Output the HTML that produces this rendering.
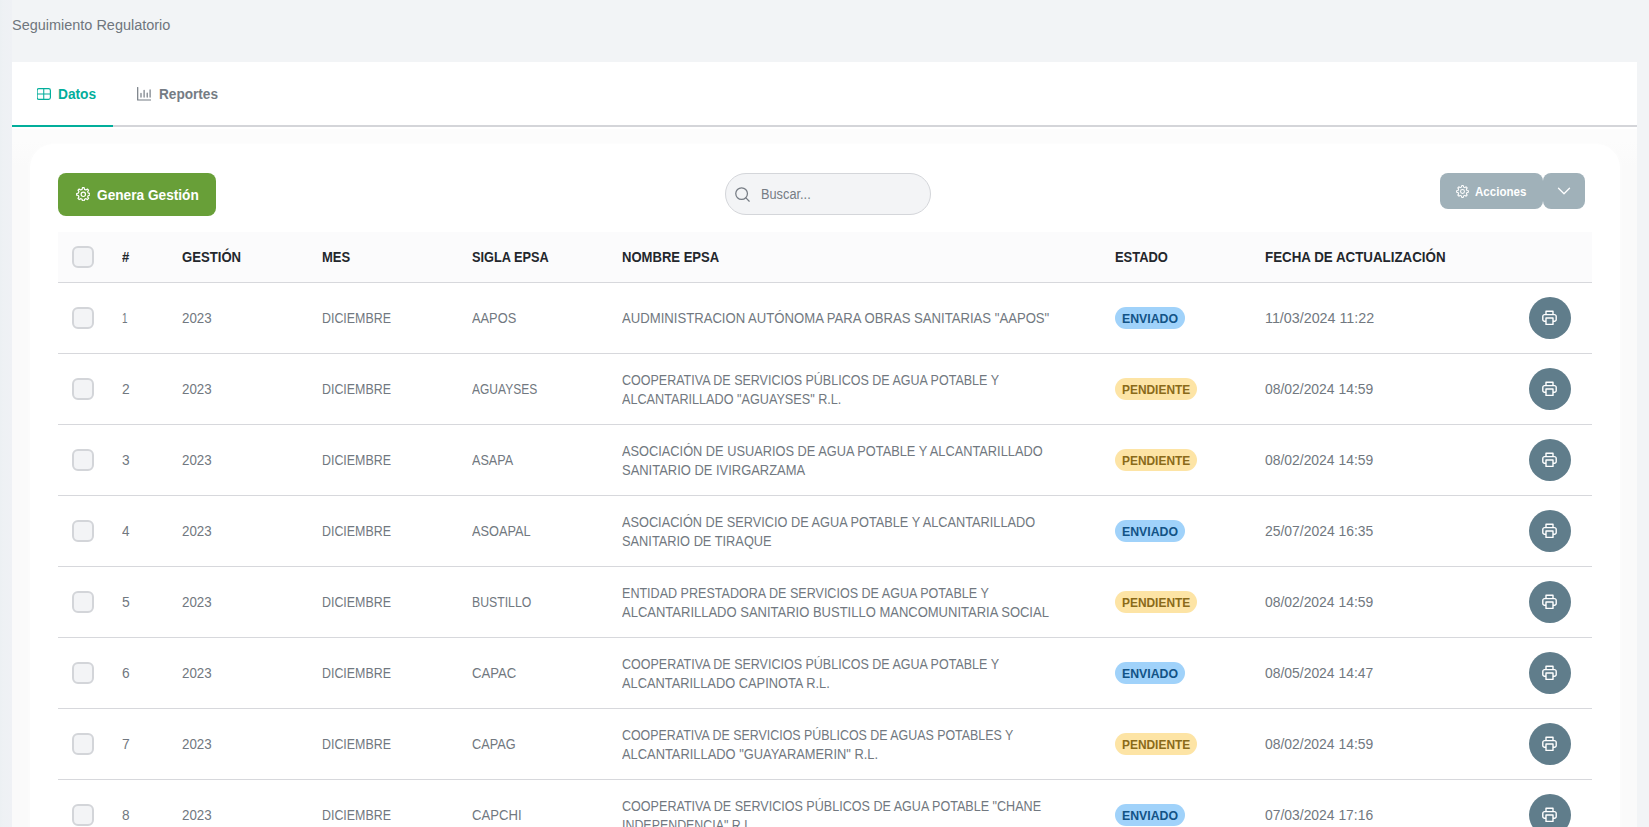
<!DOCTYPE html><html lang="es"><head><meta charset="utf-8"><title>Seguimiento Regulatorio</title><style>
*{box-sizing:border-box}
html,body{margin:0;padding:0}
body{width:1649px;height:827px;overflow:hidden;background:#f2f4f6;font-family:'Liberation Sans', sans-serif;font-size:14px;color:#6c757d;position:relative}
.abs{position:absolute}
button{border:0;margin:0;padding:0;font:inherit;color:inherit;display:block;overflow:visible;text-align:left}
.t{position:absolute;white-space:pre;transform-origin:0 50%}
.edge{left:0;top:0;width:12px;height:827px;background:linear-gradient(90deg,#ecf0f3 0,#eef1f4 3px,#eff1f5 100%)}
.panel{left:12px;top:62px;width:1625px;height:765px;background:#fff}
.tabline{left:12px;top:125px;width:1625px;height:2px;background:#d4d5d9}
.tabact{left:12px;top:125px;width:101px;height:2px;background:#02ae9b}
.content{left:12px;top:127px;width:1625px;height:700px;background:linear-gradient(180deg,#fff 0,#fff 1.5px,#fcfcfc 2px,#fcfcfc 14px,#fafafa 40px,#fafafa 100%)}
.card{left:30px;top:144px;width:1590px;height:720px;background:#fff;border-radius:24px;box-shadow:0 0 6px 1px rgba(255,255,255,.5)}
.btn-g{left:58px;top:173px;width:158px;height:43px;border-radius:8px;background:#689f38}
.search{left:725px;top:173px;width:206px;height:42px;border-radius:21px;background:#f3f4f6;border:1px solid #d4d6da}
.btn-a{left:1440px;top:173px;width:102.5px;height:36px;border-radius:8px;background:#a0b1b9}
.btn-d{left:1543px;top:173px;width:42px;height:36px;border-radius:8px;background:#a0b1b9}
.thead{left:58px;top:232px;width:1534px;height:50px;background:#fbfbfc}
.hline{left:58px;width:1534px;height:1px;background:#d7d8dc}
.cb{left:72px;width:22px;height:22px;border:2px solid #d3d5d9;border-radius:6px;background:#f3f4f6}
.badge{left:1115px;height:22px;border-radius:11px}
.env{width:70px;background:#a0d2fa}
.pen{width:82px;background:#fde4a5}
.pbtn{left:1529px;width:42px;height:42px;border-radius:50%;background:#607d8b}
.pbtn svg{position:absolute;left:13.1px;top:12.9px}
svg{display:block}
</style></head><body>
<div class="abs edge"></div>
<header><div id="t0" class="t" style="left:11.80px;top:17px;height:16px;line-height:16px;color:#6f767d;transform:scaleX(1.0329)">Seguimiento Regulatorio</div></header>
<main>
<div class="abs panel"></div><div class="abs content"></div>
<nav>
<div class="abs tabline"></div><div class="abs tabact"></div>
<div class="tabitem"><div class="abs" style="left:36.8px;top:86.6px"><svg width="14" height="14" viewBox="0 0 14 14" fill="none" stroke="#02ae9b" stroke-width="1.2"><rect x="0.1" y="1.6" width="13.3" height="10.8" rx="1.8"/><path d="M6.75 1.6V12.4M0.1 7H13.4" stroke-width="1.05"/></svg></div><div id="t1" class="t" style="left:57.80px;top:86px;height:16px;line-height:16px;font-weight:700;color:#02ae9b;transform:scaleX(0.9800)">Datos</div></div>
<div class="tabitem"><div class="abs" style="left:137.2px;top:87px"><svg width="14" height="14" viewBox="0 0 14 14" fill="none" stroke="#757c84" stroke-width="1.2" stroke-linecap="round"><path d="M0.7 0.5V13H14.2"/><path d="M4.0 6.4V10.1M7.1 3.3V10.1M10.2 6.0V10.1M13.1 2.9V10.1"/></svg></div><div id="t2" class="t" style="left:158.90px;top:86px;height:16px;line-height:16px;font-weight:700;color:#757c84;transform:scaleX(0.9723)">Reportes</div></div>
</nav>
<section>
<div class="abs card"></div>
<div class="toolbar">
<button type="button" class="abs btn-g"><span class="abs" style="left:17.9px;top:13.6px"><svg width="14.6" height="14.6" viewBox="0 0 14 14" fill="none" stroke="#fff" stroke-width="1.15" stroke-linejoin="round"><path d="M5.86 2.24 L6.20 0.65 L7.80 0.65 L8.14 2.24 L9.56 2.82 L10.92 1.94 L12.06 3.08 L11.18 4.44 L11.76 5.86 L13.35 6.20 L13.35 7.80 L11.76 8.14 L11.18 9.56 L12.06 10.92 L10.92 12.06 L9.56 11.18 L8.14 11.76 L7.80 13.35 L6.20 13.35 L5.86 11.76 L4.44 11.18 L3.08 12.06 L1.94 10.92 L2.82 9.56 L2.24 8.14 L0.65 7.80 L0.65 6.20 L2.24 5.86 L2.82 4.44 L1.94 3.08 L3.08 1.94 L4.44 2.82 Z"/><circle cx="7" cy="7" r="2.1"/></svg></span><span id="t3" class="t" style="left:39.20px;top:13px;height:17px;line-height:17px;font-weight:700;font-size:15px;color:#fff;transform:scaleX(0.9111)">Genera Gestión</span></button>
<div class="abs search"><span class="abs" style="left:8.8px;top:12.7px"><svg width="16" height="16" viewBox="0 0 16 16" fill="none" stroke="#767c84" stroke-width="1.25" stroke-linecap="round" style="overflow:visible"><circle cx="6.6" cy="6.6" r="5.85"/><path d="M10.9 10.9L14.2 14.2"/></svg></span><span id="t4" class="t" style="left:35.00px;top:12px;height:16px;line-height:16px;color:#767c84;transform:scaleX(0.9120)">Buscar...</span></div>
<button type="button" class="abs btn-a"><span class="abs" style="left:16px;top:11.5px"><svg width="13" height="13" viewBox="0 0 14 14" fill="none" stroke="#fff" stroke-width="1.1" stroke-linejoin="round"><path d="M5.86 2.24 L6.20 0.65 L7.80 0.65 L8.14 2.24 L9.56 2.82 L10.92 1.94 L12.06 3.08 L11.18 4.44 L11.76 5.86 L13.35 6.20 L13.35 7.80 L11.76 8.14 L11.18 9.56 L12.06 10.92 L10.92 12.06 L9.56 11.18 L8.14 11.76 L7.80 13.35 L6.20 13.35 L5.86 11.76 L4.44 11.18 L3.08 12.06 L1.94 10.92 L2.82 9.56 L2.24 8.14 L0.65 7.80 L0.65 6.20 L2.24 5.86 L2.82 4.44 L1.94 3.08 L3.08 1.94 L4.44 2.82 Z"/><circle cx="7" cy="7" r="2.1"/></svg></span><span id="t5" class="t" style="left:35.40px;top:10.5px;height:15px;line-height:15px;font-weight:700;font-size:13px;color:#fff;transform:scaleX(0.8894)">Acciones</span></button>
<button type="button" class="abs btn-d"><span class="abs" style="left:14px;top:11px"><svg width="14" height="14" viewBox="0 0 14 14" fill="none" stroke="#fff" stroke-width="1.3" stroke-linecap="round" stroke-linejoin="round"><path d="M1.5 4.2L7 9.8L12.5 4.2"/></svg></span></button>
</div>
<div role="table">
<div role="row"><div class="abs thead"></div><div class="abs hline" style="top:282px"></div>
<div class="abs cb" style="top:246px"></div>
<div id="t6" class="t" style="left:122.00px;top:249px;height:16px;line-height:16px;font-weight:700;color:#23272c;transform:scaleX(0.9326)">#</div>
<div id="t7" class="t" style="left:182.00px;top:249px;height:16px;line-height:16px;font-weight:700;color:#23272c;transform:scaleX(0.9377)">GESTIÓN</div>
<div id="t8" class="t" style="left:322.00px;top:249px;height:16px;line-height:16px;font-weight:700;color:#23272c;transform:scaleX(0.9277)">MES</div>
<div id="t9" class="t" style="left:471.50px;top:249px;height:16px;line-height:16px;font-weight:700;color:#23272c;transform:scaleX(0.9110)">SIGLA EPSA</div>
<div id="t10" class="t" style="left:621.50px;top:249px;height:16px;line-height:16px;font-weight:700;color:#23272c;transform:scaleX(0.9327)">NOMBRE EPSA</div>
<div id="t11" class="t" style="left:1115.00px;top:249px;height:16px;line-height:16px;font-weight:700;color:#23272c;transform:scaleX(0.9236)">ESTADO</div>
<div id="t12" class="t" style="left:1265.00px;top:249px;height:16px;line-height:16px;font-weight:700;color:#23272c;transform:scaleX(0.9527)">FECHA DE ACTUALIZACIÓN</div>
</div>
<div role="row">
<div class="abs cb" style="top:307px"></div>
<div id="t13" class="t" style="left:122.00px;top:309px;height:19px;line-height:19px;color:#717880;transform:scaleX(0.7062)">1</div>
<div id="t14" class="t" style="left:182.00px;top:309px;height:19px;line-height:19px;color:#717880;transform:scaleX(0.9534)">2023</div>
<div id="t15" class="t" style="left:321.60px;top:309px;height:19px;line-height:19px;color:#717880;transform:scaleX(0.8864)">DICIEMBRE</div>
<div id="t16" class="t" style="left:471.50px;top:309px;height:19px;line-height:19px;color:#717880;transform:scaleX(0.9161)">AAPOS</div>
<div class="name"><div id="t17" class="t" style="left:621.50px;top:309px;height:19px;line-height:19px;color:#717880;transform:scaleX(0.9371)">AUDMINISTRACION AUTÓNOMA PARA OBRAS SANITARIAS &quot;AAPOS&quot;</div></div>
<span class="abs badge env" style="top:307px"><span id="t18" class="t" style="left:7.00px;top:1px;height:22px;line-height:22px;font-weight:700;font-size:12px;color:#125386;transform:scaleX(1.0258)">ENVIADO</span></span>
<div id="t19" class="t" style="left:1265.00px;top:309px;height:19px;line-height:19px;color:#717880;transform:scaleX(1.0214)">11/03/2024 11:22</div>
<button type="button" class="abs pbtn" style="top:297px"><svg width="15" height="15" viewBox="0 0 15 15" fill="none" stroke="#fff" stroke-width="1.4" stroke-linejoin="round" style="overflow:visible"><path d="M4 4.6V1.2H11V4.6"/><path d="M4 11.2H2.6A1.8 1.8 0 0 1 0.8 9.4V6.4A1.8 1.8 0 0 1 2.6 4.6H12.4A1.8 1.8 0 0 1 14.2 6.4V9.4A1.8 1.8 0 0 1 12.4 11.2H11"/><rect x="4" y="8" width="7" height="6.4"/></svg></button>
<div class="abs hline" style="top:353px"></div>
</div>
<div role="row">
<div class="abs cb" style="top:378px"></div>
<div id="t20" class="t" style="left:122.00px;top:380px;height:19px;line-height:19px;color:#717880;transform:scaleX(0.9856)">2</div>
<div id="t21" class="t" style="left:182.00px;top:380px;height:19px;line-height:19px;color:#717880;transform:scaleX(0.9534)">2023</div>
<div id="t22" class="t" style="left:321.60px;top:380px;height:19px;line-height:19px;color:#717880;transform:scaleX(0.8864)">DICIEMBRE</div>
<div id="t23" class="t" style="left:471.50px;top:380px;height:19px;line-height:19px;color:#717880;transform:scaleX(0.8579)">AGUAYSES</div>
<div class="name"><div id="t24" class="t" style="left:621.50px;top:370.5px;height:19px;line-height:19px;color:#717880;transform:scaleX(0.8934)">COOPERATIVA DE SERVICIOS PÚBLICOS DE AGUA POTABLE Y</div><div id="t25" class="t" style="left:621.50px;top:389.5px;height:19px;line-height:19px;color:#717880;transform:scaleX(0.9034)">ALCANTARILLADO &quot;AGUAYSES&quot; R.L.</div></div>
<span class="abs badge pen" style="top:378px"><span id="t26" class="t" style="left:7.00px;top:1px;height:22px;line-height:22px;font-weight:700;font-size:12px;color:#8a6a19;transform:scaleX(0.9935)">PENDIENTE</span></span>
<div id="t27" class="t" style="left:1265.00px;top:380px;height:19px;line-height:19px;color:#717880;transform:scaleX(0.9928)">08/02/2024 14:59</div>
<button type="button" class="abs pbtn" style="top:368px"><svg width="15" height="15" viewBox="0 0 15 15" fill="none" stroke="#fff" stroke-width="1.4" stroke-linejoin="round" style="overflow:visible"><path d="M4 4.6V1.2H11V4.6"/><path d="M4 11.2H2.6A1.8 1.8 0 0 1 0.8 9.4V6.4A1.8 1.8 0 0 1 2.6 4.6H12.4A1.8 1.8 0 0 1 14.2 6.4V9.4A1.8 1.8 0 0 1 12.4 11.2H11"/><rect x="4" y="8" width="7" height="6.4"/></svg></button>
<div class="abs hline" style="top:424px"></div>
</div>
<div role="row">
<div class="abs cb" style="top:449px"></div>
<div id="t28" class="t" style="left:122.00px;top:451px;height:19px;line-height:19px;color:#717880;transform:scaleX(0.9807)">3</div>
<div id="t29" class="t" style="left:182.00px;top:451px;height:19px;line-height:19px;color:#717880;transform:scaleX(0.9534)">2023</div>
<div id="t30" class="t" style="left:321.60px;top:451px;height:19px;line-height:19px;color:#717880;transform:scaleX(0.8864)">DICIEMBRE</div>
<div id="t31" class="t" style="left:471.50px;top:451px;height:19px;line-height:19px;color:#717880;transform:scaleX(0.9002)">ASAPA</div>
<div class="name"><div id="t32" class="t" style="left:621.50px;top:441.5px;height:19px;line-height:19px;color:#717880;transform:scaleX(0.9137)">ASOCIACIÓN DE USUARIOS DE AGUA POTABLE Y ALCANTARILLADO</div><div id="t33" class="t" style="left:621.50px;top:460.5px;height:19px;line-height:19px;color:#717880;transform:scaleX(0.9246)">SANITARIO DE IVIRGARZAMA</div></div>
<span class="abs badge pen" style="top:449px"><span id="t34" class="t" style="left:7.00px;top:1px;height:22px;line-height:22px;font-weight:700;font-size:12px;color:#8a6a19;transform:scaleX(0.9935)">PENDIENTE</span></span>
<div id="t35" class="t" style="left:1265.00px;top:451px;height:19px;line-height:19px;color:#717880;transform:scaleX(0.9928)">08/02/2024 14:59</div>
<button type="button" class="abs pbtn" style="top:439px"><svg width="15" height="15" viewBox="0 0 15 15" fill="none" stroke="#fff" stroke-width="1.4" stroke-linejoin="round" style="overflow:visible"><path d="M4 4.6V1.2H11V4.6"/><path d="M4 11.2H2.6A1.8 1.8 0 0 1 0.8 9.4V6.4A1.8 1.8 0 0 1 2.6 4.6H12.4A1.8 1.8 0 0 1 14.2 6.4V9.4A1.8 1.8 0 0 1 12.4 11.2H11"/><rect x="4" y="8" width="7" height="6.4"/></svg></button>
<div class="abs hline" style="top:495px"></div>
</div>
<div role="row">
<div class="abs cb" style="top:520px"></div>
<div id="t36" class="t" style="left:122.00px;top:522px;height:19px;line-height:19px;color:#717880;transform:scaleX(0.9619)">4</div>
<div id="t37" class="t" style="left:182.00px;top:522px;height:19px;line-height:19px;color:#717880;transform:scaleX(0.9534)">2023</div>
<div id="t38" class="t" style="left:321.60px;top:522px;height:19px;line-height:19px;color:#717880;transform:scaleX(0.8864)">DICIEMBRE</div>
<div id="t39" class="t" style="left:471.50px;top:522px;height:19px;line-height:19px;color:#717880;transform:scaleX(0.9110)">ASOAPAL</div>
<div class="name"><div id="t40" class="t" style="left:621.50px;top:512.5px;height:19px;line-height:19px;color:#717880;transform:scaleX(0.9103)">ASOCIACIÓN DE SERVICIO DE AGUA POTABLE Y ALCANTARILLADO</div><div id="t41" class="t" style="left:621.50px;top:531.5px;height:19px;line-height:19px;color:#717880;transform:scaleX(0.9147)">SANITARIO DE TIRAQUE</div></div>
<span class="abs badge env" style="top:520px"><span id="t42" class="t" style="left:7.00px;top:1px;height:22px;line-height:22px;font-weight:700;font-size:12px;color:#125386;transform:scaleX(1.0258)">ENVIADO</span></span>
<div id="t43" class="t" style="left:1265.00px;top:522px;height:19px;line-height:19px;color:#717880;transform:scaleX(0.9939)">25/07/2024 16:35</div>
<button type="button" class="abs pbtn" style="top:510px"><svg width="15" height="15" viewBox="0 0 15 15" fill="none" stroke="#fff" stroke-width="1.4" stroke-linejoin="round" style="overflow:visible"><path d="M4 4.6V1.2H11V4.6"/><path d="M4 11.2H2.6A1.8 1.8 0 0 1 0.8 9.4V6.4A1.8 1.8 0 0 1 2.6 4.6H12.4A1.8 1.8 0 0 1 14.2 6.4V9.4A1.8 1.8 0 0 1 12.4 11.2H11"/><rect x="4" y="8" width="7" height="6.4"/></svg></button>
<div class="abs hline" style="top:566px"></div>
</div>
<div role="row">
<div class="abs cb" style="top:591px"></div>
<div id="t44" class="t" style="left:122.00px;top:593px;height:19px;line-height:19px;color:#717880;transform:scaleX(0.9927)">5</div>
<div id="t45" class="t" style="left:182.00px;top:593px;height:19px;line-height:19px;color:#717880;transform:scaleX(0.9534)">2023</div>
<div id="t46" class="t" style="left:321.60px;top:593px;height:19px;line-height:19px;color:#717880;transform:scaleX(0.8864)">DICIEMBRE</div>
<div id="t47" class="t" style="left:471.50px;top:593px;height:19px;line-height:19px;color:#717880;transform:scaleX(0.8758)">BUSTILLO</div>
<div class="name"><div id="t48" class="t" style="left:621.50px;top:583.5px;height:19px;line-height:19px;color:#717880;transform:scaleX(0.8969)">ENTIDAD PRESTADORA DE SERVICIOS DE AGUA POTABLE Y</div><div id="t49" class="t" style="left:621.50px;top:602.5px;height:19px;line-height:19px;color:#717880;transform:scaleX(0.9285)">ALCANTARILLADO SANITARIO BUSTILLO MANCOMUNITARIA SOCIAL</div></div>
<span class="abs badge pen" style="top:591px"><span id="t50" class="t" style="left:7.00px;top:1px;height:22px;line-height:22px;font-weight:700;font-size:12px;color:#8a6a19;transform:scaleX(0.9935)">PENDIENTE</span></span>
<div id="t51" class="t" style="left:1265.00px;top:593px;height:19px;line-height:19px;color:#717880;transform:scaleX(0.9928)">08/02/2024 14:59</div>
<button type="button" class="abs pbtn" style="top:581px"><svg width="15" height="15" viewBox="0 0 15 15" fill="none" stroke="#fff" stroke-width="1.4" stroke-linejoin="round" style="overflow:visible"><path d="M4 4.6V1.2H11V4.6"/><path d="M4 11.2H2.6A1.8 1.8 0 0 1 0.8 9.4V6.4A1.8 1.8 0 0 1 2.6 4.6H12.4A1.8 1.8 0 0 1 14.2 6.4V9.4A1.8 1.8 0 0 1 12.4 11.2H11"/><rect x="4" y="8" width="7" height="6.4"/></svg></button>
<div class="abs hline" style="top:637px"></div>
</div>
<div role="row">
<div class="abs cb" style="top:662px"></div>
<div id="t52" class="t" style="left:122.00px;top:664px;height:19px;line-height:19px;color:#717880;transform:scaleX(0.9813)">6</div>
<div id="t53" class="t" style="left:182.00px;top:664px;height:19px;line-height:19px;color:#717880;transform:scaleX(0.9534)">2023</div>
<div id="t54" class="t" style="left:321.60px;top:664px;height:19px;line-height:19px;color:#717880;transform:scaleX(0.8864)">DICIEMBRE</div>
<div id="t55" class="t" style="left:471.50px;top:664px;height:19px;line-height:19px;color:#717880;transform:scaleX(0.9391)">CAPAC</div>
<div class="name"><div id="t56" class="t" style="left:621.50px;top:654.5px;height:19px;line-height:19px;color:#717880;transform:scaleX(0.8934)">COOPERATIVA DE SERVICIOS PÚBLICOS DE AGUA POTABLE Y</div><div id="t57" class="t" style="left:621.50px;top:673.5px;height:19px;line-height:19px;color:#717880;transform:scaleX(0.9168)">ALCANTARILLADO CAPINOTA R.L.</div></div>
<span class="abs badge env" style="top:662px"><span id="t58" class="t" style="left:7.00px;top:1px;height:22px;line-height:22px;font-weight:700;font-size:12px;color:#125386;transform:scaleX(1.0258)">ENVIADO</span></span>
<div id="t59" class="t" style="left:1265.00px;top:664px;height:19px;line-height:19px;color:#717880;transform:scaleX(0.9930)">08/05/2024 14:47</div>
<button type="button" class="abs pbtn" style="top:652px"><svg width="15" height="15" viewBox="0 0 15 15" fill="none" stroke="#fff" stroke-width="1.4" stroke-linejoin="round" style="overflow:visible"><path d="M4 4.6V1.2H11V4.6"/><path d="M4 11.2H2.6A1.8 1.8 0 0 1 0.8 9.4V6.4A1.8 1.8 0 0 1 2.6 4.6H12.4A1.8 1.8 0 0 1 14.2 6.4V9.4A1.8 1.8 0 0 1 12.4 11.2H11"/><rect x="4" y="8" width="7" height="6.4"/></svg></button>
<div class="abs hline" style="top:708px"></div>
</div>
<div role="row">
<div class="abs cb" style="top:733px"></div>
<div id="t60" class="t" style="left:122.00px;top:735px;height:19px;line-height:19px;color:#717880;transform:scaleX(0.9890)">7</div>
<div id="t61" class="t" style="left:182.00px;top:735px;height:19px;line-height:19px;color:#717880;transform:scaleX(0.9534)">2023</div>
<div id="t62" class="t" style="left:321.60px;top:735px;height:19px;line-height:19px;color:#717880;transform:scaleX(0.8864)">DICIEMBRE</div>
<div id="t63" class="t" style="left:471.50px;top:735px;height:19px;line-height:19px;color:#717880;transform:scaleX(0.9078)">CAPAG</div>
<div class="name"><div id="t64" class="t" style="left:621.50px;top:725.5px;height:19px;line-height:19px;color:#717880;transform:scaleX(0.8865)">COOPERATIVA DE SERVICIOS PÚBLICOS DE AGUAS POTABLES Y</div><div id="t65" class="t" style="left:621.50px;top:744.5px;height:19px;line-height:19px;color:#717880;transform:scaleX(0.9199)">ALCANTARILLADO &quot;GUAYARAMERIN&quot; R.L.</div></div>
<span class="abs badge pen" style="top:733px"><span id="t66" class="t" style="left:7.00px;top:1px;height:22px;line-height:22px;font-weight:700;font-size:12px;color:#8a6a19;transform:scaleX(0.9935)">PENDIENTE</span></span>
<div id="t67" class="t" style="left:1265.00px;top:735px;height:19px;line-height:19px;color:#717880;transform:scaleX(0.9928)">08/02/2024 14:59</div>
<button type="button" class="abs pbtn" style="top:723px"><svg width="15" height="15" viewBox="0 0 15 15" fill="none" stroke="#fff" stroke-width="1.4" stroke-linejoin="round" style="overflow:visible"><path d="M4 4.6V1.2H11V4.6"/><path d="M4 11.2H2.6A1.8 1.8 0 0 1 0.8 9.4V6.4A1.8 1.8 0 0 1 2.6 4.6H12.4A1.8 1.8 0 0 1 14.2 6.4V9.4A1.8 1.8 0 0 1 12.4 11.2H11"/><rect x="4" y="8" width="7" height="6.4"/></svg></button>
<div class="abs hline" style="top:779px"></div>
</div>
<div role="row">
<div class="abs cb" style="top:804px"></div>
<div id="t68" class="t" style="left:122.00px;top:806px;height:19px;line-height:19px;color:#717880;transform:scaleX(0.9738)">8</div>
<div id="t69" class="t" style="left:182.00px;top:806px;height:19px;line-height:19px;color:#717880;transform:scaleX(0.9534)">2023</div>
<div id="t70" class="t" style="left:321.60px;top:806px;height:19px;line-height:19px;color:#717880;transform:scaleX(0.8864)">DICIEMBRE</div>
<div id="t71" class="t" style="left:471.50px;top:806px;height:19px;line-height:19px;color:#717880;transform:scaleX(0.9363)">CAPCHI</div>
<div class="name"><div id="t72" class="t" style="left:621.50px;top:796.5px;height:19px;line-height:19px;color:#717880;transform:scaleX(0.8976)">COOPERATIVA DE SERVICIOS PÚBLICOS DE AGUA POTABLE &quot;CHANE</div><div id="t73" class="t" style="left:621.50px;top:815.5px;height:19px;line-height:19px;color:#717880;transform:scaleX(0.8858)">INDEPENDENCIA&quot; R.L.</div></div>
<span class="abs badge env" style="top:804px"><span id="t74" class="t" style="left:7.00px;top:1px;height:22px;line-height:22px;font-weight:700;font-size:12px;color:#125386;transform:scaleX(1.0258)">ENVIADO</span></span>
<div id="t75" class="t" style="left:1265.00px;top:806px;height:19px;line-height:19px;color:#717880;transform:scaleX(0.9924)">07/03/2024 17:16</div>
<button type="button" class="abs pbtn" style="top:794px"><svg width="15" height="15" viewBox="0 0 15 15" fill="none" stroke="#fff" stroke-width="1.4" stroke-linejoin="round" style="overflow:visible"><path d="M4 4.6V1.2H11V4.6"/><path d="M4 11.2H2.6A1.8 1.8 0 0 1 0.8 9.4V6.4A1.8 1.8 0 0 1 2.6 4.6H12.4A1.8 1.8 0 0 1 14.2 6.4V9.4A1.8 1.8 0 0 1 12.4 11.2H11"/><rect x="4" y="8" width="7" height="6.4"/></svg></button>
<div class="abs hline" style="top:850px"></div>
</div>
</div></section></main>
</body></html>
